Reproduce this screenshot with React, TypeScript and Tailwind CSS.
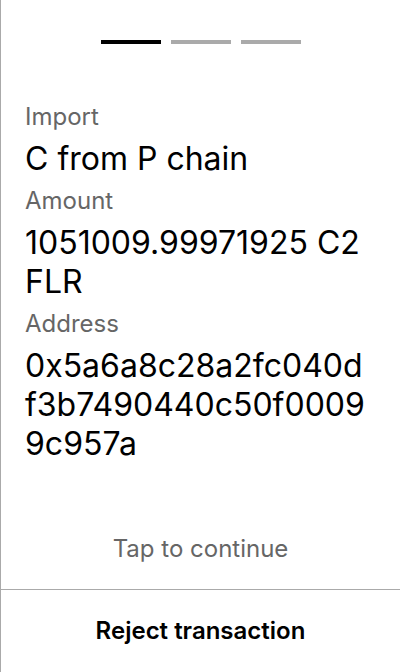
import React from 'react';

const fields = [
  { label: 'Import', value: 'C from P chain' },
  { label: 'Amount', value: '1051009.99971925 C2FLR' },
  { label: 'Address', value: '0x5a6a8c28a2fc040df3b7490440c50f00099c957a' },
];

const Steps = ({ active }: { active: number }) => (
  <div className="flex justify-center gap-[10px] pt-10">
    {[0, 1, 2].map((i) => (
      <div key={i} className={i === active ? 'w-[60px] h-1 bg-black' : 'w-[60px] h-1 bg-[#aaaaaa]'} />
    ))}
  </div>
);

export default function App() {
  return (
    <div className="h-[672px] flex flex-col bg-white border-l border-[#aaaaaa] font-['Inter',sans-serif] text-black">
      <div className="flex-1 flex flex-col">
        <Steps active={0} />
        <div className="pl-6 pr-7 pt-[58px] flex flex-col gap-2">
          {fields.map((f) => (
            <div key={f.label} className="flex flex-col gap-2">
              <div className="text-2xl leading-[29px] text-[#666666]">{f.label}</div>
              <div className="text-[32px] leading-[39px] break-all">{f.value}</div>
            </div>
          ))}
        </div>
        <div className="mt-auto pb-[26px] text-center text-2xl leading-[29px] text-[#666666]">Tap to continue</div>
      </div>
      <button className="h-[83px] border-t border-[#aaaaaa] text-2xl font-semibold text-black">
        Reject transaction
      </button>
    </div>
  );
}
